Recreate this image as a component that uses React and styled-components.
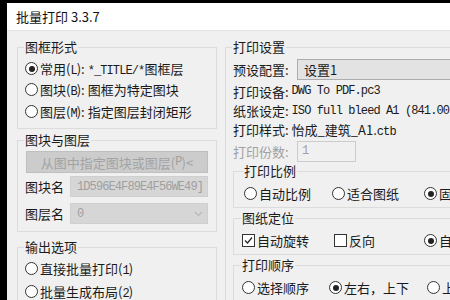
import React from "react";
import styled, { createGlobalStyle } from "styled-components";

const Global = createGlobalStyle`
  html, body { margin: 0; padding: 0; background: #000; overflow: hidden; }
  body { width: 450px; height: 300px; }
`;

const cjk = `"Noto Sans CJK SC", "Microsoft YaHei", sans-serif`;

const Window = styled.div`
  margin: 3px 0 0 7px;
  width: 560px;
  height: 400px;
  background: #f0f0f0;
  font-family: ${cjk};
  font-size: 13px;
  color: #1a1a1a;
  display: flex;
  flex-direction: column;
`;

const TitleBar = styled.div`
  height: 27px;
  background: #fff;
  display: flex;
  align-items: center;
  padding-left: 9px;
  font-size: 13px;
  color: #111;
  border-bottom: 1px solid #e4e4e4;
`;

const Body = styled.div`
  display: flex;
  gap: 8px;
  padding: 8px 0 0 10px;
`;

const Column = styled.div`
  display: flex;
  flex-direction: column;
  width: ${(p) => p.$w};
  flex: none;
`;

const Group = styled.fieldset`
  margin: 0 0 ${(p) => p.$mb || 0}px 0;
  padding: ${(p) => p.$pad || "0 0 4px 7px"};
  border: 1px solid #dcdcdc;
  border-right: ${(p) => (p.$open ? "none" : "1px solid #dcdcdc")};
  min-width: 0;
  display: flex;
  flex-direction: column;
`;

const Legend = styled.legend`
  padding: 0 1px;
  margin-left: -1px;
  font-size: 13px;
  line-height: 16px;
  color: #1a1a1a;
`;

const Row = styled.div`
  display: flex;
  align-items: center;
  height: ${(p) => p.$h || 21}px;
  white-space: nowrap;
`;

const Mono = styled.span`
  font-family: "Liberation Mono", "Courier New", monospace;
  font-size: 12px;
  letter-spacing: -0.9px;
  color: ${(p) => (p.$dim ? "#a0a0a0" : "inherit")};
`;

const RadioCircle = styled.span`
  width: 11px;
  height: 11px;
  border: 1px solid #333;
  border-radius: 50%;
  background: #fff;
  display: inline-flex;
  align-items: center;
  justify-content: center;
  margin-right: 2px;
  flex: none;
  &::after {
    content: "";
    width: 6px;
    height: 6px;
    border-radius: 50%;
    background: ${(p) => (p.$on ? "#222" : "transparent")};
  }
`;

const CheckBox = styled.span`
  width: 11px;
  height: 11px;
  border: 1px solid #333;
  background: #fff;
  display: inline-flex;
  align-items: center;
  justify-content: center;
  margin-right: 2px;
  flex: none;
`;

const Opt = styled.span`
  display: inline-flex;
  align-items: center;
  width: ${(p) => (p.$w ? p.$w + "px" : "auto")};
  flex: none;
`;

const Radio = ({ on, children, w }) => (
  <Opt $w={w}>
    <RadioCircle $on={on} />
    <span>{children}</span>
  </Opt>
);

const Check = ({ on, children, w }) => (
  <Opt $w={w}>
    <CheckBox>
      {on && (
        <svg width="9" height="9" viewBox="0 0 9 9">
          <path d="M1 4.5 L3.5 7 L8 1.5" fill="none" stroke="#222" strokeWidth="1.2" />
        </svg>
      )}
    </CheckBox>
    <span>{children}</span>
  </Opt>
);

const DisabledButton = styled.div`
  height: 20px;
  margin: 3px 8px 0 1px;
  background: #cccccc;
  border: 1px solid #bfbfbf;
  color: #a3a3a3;
  display: flex;
  align-items: center;
  justify-content: center;
  font-size: 13px;
`;

const Label = styled.span`
  width: ${(p) => p.$w}px;
  flex: none;
  color: ${(p) => (p.$dim ? "#a0a0a0" : "inherit")};
`;

const Combo = styled.div`
  flex: 1;
  height: 21px;
  margin-right: ${(p) => p.$mr || 0}px;
  background: ${(p) => (p.$disabled ? "#d6d6d6" : "#e3e3e3")};
  border: 1px solid ${(p) => (p.$disabled ? "#cfcfcf" : "#acacac")};
  display: flex;
  align-items: center;
  justify-content: space-between;
  padding: 0 4px 0 6px;
  box-sizing: border-box;
  overflow: hidden;
`;

const Input = styled.div`
  width: 59px;
  height: 21px;
  box-sizing: border-box;
  border: 1px solid #cccccc;
  background: #f0f0f0;
  display: flex;
  align-items: center;
  padding-left: 4px;
`;

const Chevron = () => (
  <svg width="9" height="6" viewBox="0 0 9 6">
    <path d="M1 1 L4.5 4.5 L8 1" fill="none" stroke="#b8b8b8" strokeWidth="1.2" />
  </svg>
);

export default function App() {
  return (
    <>
      <Global />
      <Window>
        <TitleBar>批量打印 3.3.7</TitleBar>
        <Body>
          <Column $w="200px">
            <Group $mb={3} $pad="3px 0 6px 7px">
              <Legend>图框形式</Legend>
              <Row $h={21}>
                <Radio on>常用(<Mono>L</Mono>):</Radio>
                <span>&nbsp;<Mono>*_TITLE/*</Mono>图框层</span>
              </Row>
              <Row $h={21}>
                <Radio>图块(<Mono>B</Mono>):</Radio>
                <span>&nbsp;图框为特定图块</span>
              </Row>
              <Row $h={22}>
                <Radio>图层(<Mono>M</Mono>):</Radio>
                <span>&nbsp;指定图层封闭矩形</span>
              </Row>
            </Group>
            <Group $mb={7} $pad="0 0 4px 7px">
              <Legend>图块与图层</Legend>
              <DisabledButton>从图中指定图块或图层(<Mono $dim>P</Mono>)&lt;</DisabledButton>
              <Row $h={27}>
                <Label $w={45}>图块名</Label>
                <Combo $disabled $mr={8}>
                  <Mono $dim>1D596E4F89E4F56WE49]</Mono>
                  <Chevron />
                </Combo>
              </Row>
              <Row $h={27}>
                <Label $w={45}>图层名</Label>
                <Combo $disabled $mr={8}>
                  <Mono $dim>0</Mono>
                  <Chevron />
                </Combo>
              </Row>
            </Group>
            <Group $pad="2px 0 4px 7px">
              <Legend>输出选项</Legend>
              <Row $h={23}>
                <Radio>直接批量打印(<Mono>1</Mono>)</Radio>
              </Row>
              <Row $h={23}>
                <Radio>批量生成布局(<Mono>2</Mono>)</Radio>
              </Row>
            </Group>
          </Column>
          <Column $w="320px">
            <Group $open $pad="2px 0 4px 7px">
              <Legend>打印设置</Legend>
              <Row $h={24}>
                <Label $w={64}>预设配置:</Label>
                <Combo>设置1</Combo>
              </Row>
              <Row $h={20}>
                <span>打印设备:&nbsp;</span>
                <Mono>DWG To PDF.pc3</Mono>
              </Row>
              <Row $h={19}>
                <span>纸张设定:&nbsp;</span>
                <Mono>ISO full bleed A1 (841.00 x 594.00</Mono>
              </Row>
              <Row $h={19}>
                <span>打印样式:&nbsp;</span>
                <span>怡成_建筑_A1.<Mono>ctb</Mono></span>
              </Row>
              <Row $h={24}>
                <Label $w={64} $dim>打印份数:</Label>
                <Input>
                  <Mono $dim>1</Mono>
                </Input>
              </Row>
              <Group $open $mb={2} $pad="3px 0 2px 10px">
                <Legend>打印比例</Legend>
                <Row $h={23}>
                  <Radio w={88}>自动比例</Radio>
                  <Radio w={92}>适合图纸</Radio>
                  <Radio on>固定比例</Radio>
                </Row>
              </Group>
              <Group $open $mb={2} $pad="3px 0 2px 8px">
                <Legend>图纸定位</Legend>
                <Row $h={23}>
                  <Check on w={92}>自动旋转</Check>
                  <Check w={90}>反向</Check>
                  <Radio on>自动居中</Radio>
                </Row>
              </Group>
              <Group $open $pad="3px 0 2px 8px">
                <Legend>打印顺序</Legend>
                <Row $h={23}>
                  <Radio w={87}>选择顺序</Radio>
                  <Radio on w={98}>左右，上下</Radio>
                  <Radio>上下，左右</Radio>
                </Row>
              </Group>
            </Group>
          </Column>
        </Body>
      </Window>
    </>
  );
}
